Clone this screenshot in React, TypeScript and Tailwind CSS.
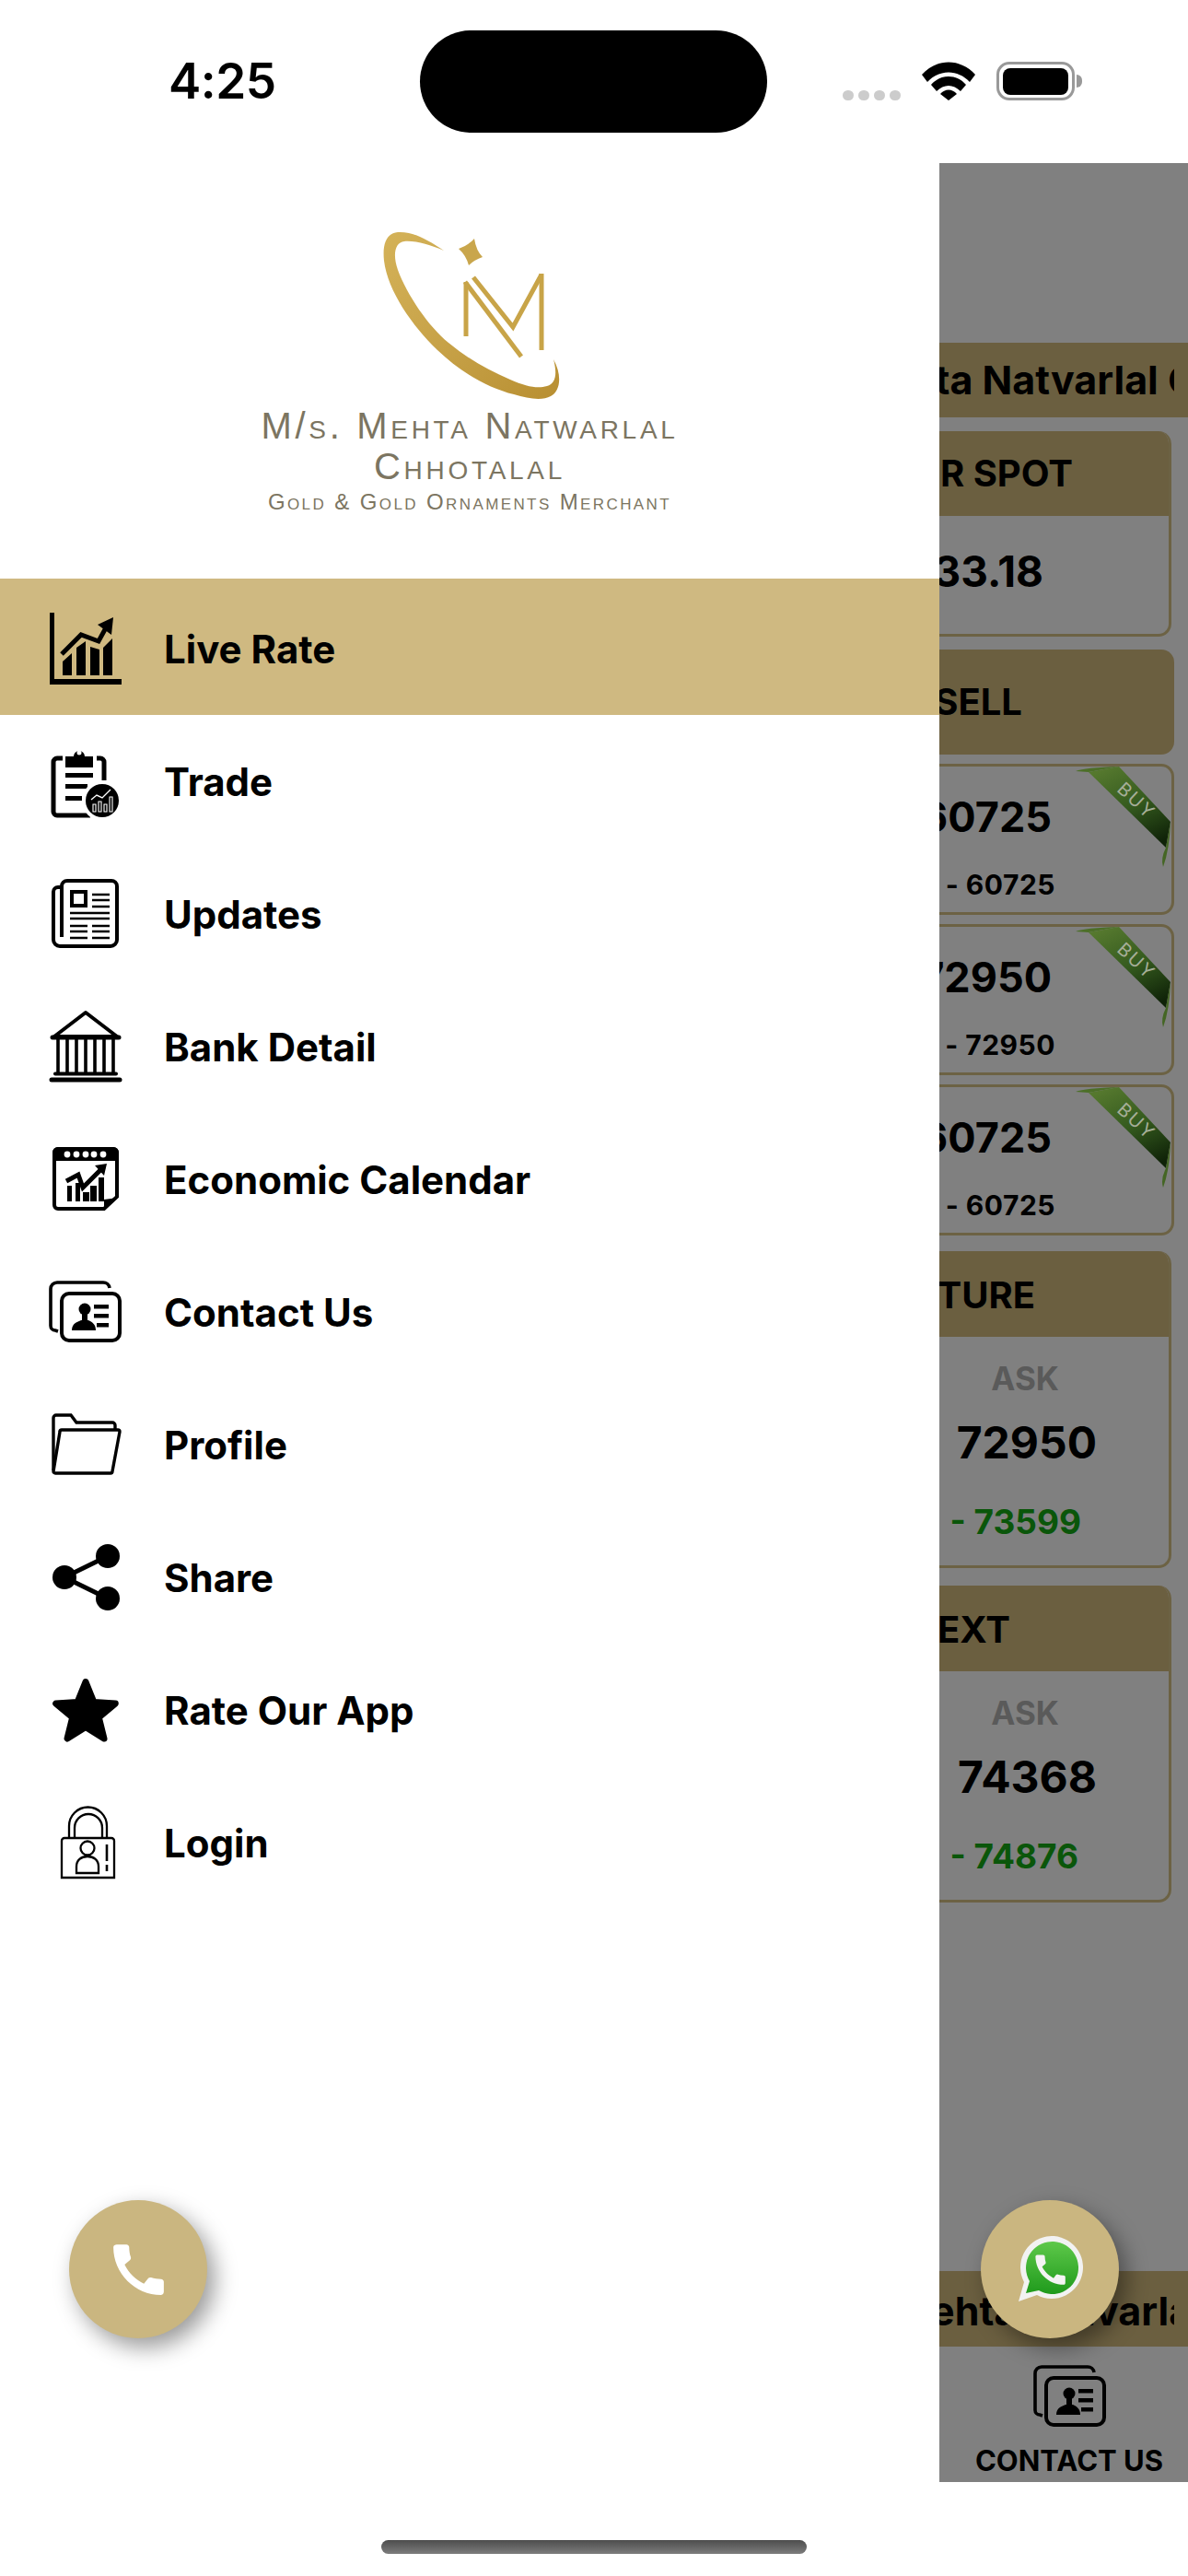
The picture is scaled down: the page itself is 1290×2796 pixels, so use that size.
import type { ReactNode } from "react";
import { MdCall } from "react-icons/md";

function Glyph({ children }: { children: ReactNode }) {
  return (
    <svg width="80" height="80" viewBox="0 0 80 80" className="shrink-0">
      {children}
    </svg>
  );
}

const LiveIcon = () => (
  <Glyph>
    <path d="M1 1h5v72h73v6H1z" />
    <path d="M15 69V54l10-9v24zM30 69V39l10-7 0 37zM45 69V38l10 3v28zM59 69V39l10-10v40z" />
    <path d="M14 46l21-21 19 7 11-20" fill="none" stroke="#000" strokeWidth="5" />
    <path d="M53 14l17-8-2 19z" />
  </Glyph>
);

const TradeIcon = () => (
  <Glyph>
    <path d="M15 15H9a4 4 0 0 0-4 4v54a4 4 0 0 0 4 4h36M52 15h4a4 4 0 0 1 4 4v20" fill="none" stroke="#000" strokeWidth="5" />
    <path d="M18 25V13h9a6 6 0 0 1 12 0h9v12z" />
    <circle cx="33" cy="9" r="2.5" fill="#fff" />
    <path d="M18 31h30v5H18zM18 43h24v5H18zM18 56h18v5H18z" />
    <circle cx="58" cy="61" r="22" fill="#fff" />
    <circle cx="58" cy="61" r="18" />
    <path d="M46 60l6-5 6 3 9-9" fill="none" stroke="#fff" strokeWidth="1.4" />
    <path d="M48 65h3v8h-3zM54 62h3v11h-3zM60 65h3v8h-3zM66 57h3v16h-3z" fill="none" stroke="#fff" strokeWidth="1.1" />
  </Glyph>
);

const UpdatesIcon = () => (
  <Glyph>
    <path d="M14 11H10a5 5 0 0 0-5 5v52a7 7 0 0 0 7 7h55a7 7 0 0 0 7-7V10a6 6 0 0 0-6-6H20a6 6 0 0 0-6 6v55" fill="none" stroke="#000" strokeWidth="4" />
    <rect x="25" y="16" width="15" height="15" fill="none" stroke="#000" strokeWidth="4" />
    <path d="M47 19h19M47 25h19M47 32h19M23 39h43M23 45h43M23 53h19M47 53h19M23 59h19M47 59h19M23 66h19M47 66h19" stroke="#000" strokeWidth="2.6" />
  </Glyph>
);

const BankIcon = () => (
  <Glyph>
    <path d="M6 29L40 3l34 26z" fill="none" stroke="#000" strokeWidth="4" strokeLinejoin="round" />
    <path d="M4 30h72" stroke="#000" strokeWidth="5" strokeLinecap="round" />
    <path d="M10 32v36M20 32v36M30 32v36M40 32v36M50 32v36M60 32v36M70 32v36" stroke="#000" strokeWidth="3.6" />
    <path d="M7 69.5h66" stroke="#000" strokeWidth="4" strokeLinecap="round" />
    <path d="M3 76h74" stroke="#000" strokeWidth="5" strokeLinecap="round" />
  </Glyph>
);

const CalendarIcon = () => (
  <Glyph>
    <path d="M10 7h60a4 4 0 0 1 4 4v48L60 72H10a4 4 0 0 1-4-4V11a4 4 0 0 1 4-4z" fill="#fff" stroke="#000" strokeWidth="4" />
    <path d="M10 5h60a6 6 0 0 1 6 6v9H4v-9a6 6 0 0 1 6-6z" />
    <g fill="#fff">
      <circle cx="20" cy="13" r="3.4" />
      <circle cx="30" cy="13" r="3.4" />
      <circle cx="40" cy="13" r="3.4" />
      <circle cx="49" cy="13" r="3.4" />
      <circle cx="59" cy="13" r="3.4" />
    </g>
    <path d="M20 64V47h5v17zM29 64V44h5v20zM37 64V54h7v10zM45 64V47h7v17zM54 64V38h6v26z" />
    <path d="M19 42l13-7 5 14 20-20" fill="none" stroke="#000" strokeWidth="5" />
    <path d="M50 25l13-2-3 13z" />
    <path d="M60 73V62l15-2z" />
  </Glyph>
);

const ContactIcon = () => (
  <Glyph>
    <path d="M10 61l-3-1a5 5 0 0 1-5-5V15a7 7 0 0 1 7-7h50a7 7 0 0 1 7 6" fill="none" stroke="#000" strokeWidth="3.6" />
    <rect x="14" y="20" width="63" height="51" rx="8" fill="#fff" fillOpacity="0" stroke="#000" strokeWidth="4" />
    <circle cx="39" cy="37" r="6.5" />
    <path d="M25 60c0-8 6-9 10-11h8c4 2 8 4 8 11z" />
    <path d="M36 40h6v9h-6zM49 32h16v4.5H49zM49 42h16v4.5H49zM52 52h13v4.5H52z" />
  </Glyph>
);

const FolderIcon = () => (
  <Glyph>
    <path d="M5 68V11a3 3 0 0 1 3-3h16l6 8h39a3 3 0 0 1 3 3v5" fill="none" stroke="#000" strokeWidth="3.4" />
    <path d="M14 24h61a2 2 0 0 1 2 2l-8 43a2 2 0 0 1-2 2H7a2 2 0 0 1-2-2l7-43a2 2 0 0 1 2-2z" fill="none" stroke="#000" strokeWidth="3.4" strokeLinejoin="round" />
  </Glyph>
);

const ShareIcon = () => (
  <Glyph>
    <path d="M64 17L17 40l47 23" fill="none" stroke="#000" strokeWidth="5" />
    <circle cx="64" cy="17" r="13" />
    <circle cx="17" cy="40" r="13" />
    <circle cx="64" cy="63" r="13" />
  </Glyph>
);

const StarIcon = () => (
  <Glyph>
    <polygon
      points="40,9.5 48.8,31.4 72.3,33 54.3,48.1 60,71 40,58.5 20,71 25.7,48.1 7.7,33 31.2,31.4"
      stroke="#000"
      strokeWidth="7"
      strokeLinejoin="round"
    />
  </Glyph>
);

const LockIcon = () => (
  <Glyph>
    <path d="M22 35V22a20 20 0 0 1 41 0v13M28 35V24a14.500 14.500 0 0 1 30 0v11" fill="none" stroke="#000" strokeWidth="2.3" />
    <path d="M14 78V38a3 3 0 0 1 3-3h51a3 3 0 0 1 3 3v40z" fill="none" stroke="#000" strokeWidth="2.3" />
    <circle cx="42" cy="46" r="7.500" fill="none" stroke="#000" strokeWidth="2.3" />
    <path d="M30 73v-7c0-7 5-11 12-11s12 4 12 11v7z" fill="none" stroke="#000" strokeWidth="2.3" />
    <path d="M63 42v18M63 64v7" stroke="#000" strokeWidth="2.6" />
  </Glyph>
);

const menu = [
  { label: "Trade", icon: <TradeIcon /> },
  { label: "Updates", icon: <UpdatesIcon /> },
  { label: "Bank Detail", icon: <BankIcon /> },
  { label: "Economic Calendar", icon: <CalendarIcon /> },
  { label: "Contact Us", icon: <ContactIcon /> },
  { label: "Profile", icon: <FolderIcon /> },
  { label: "Share", icon: <ShareIcon /> },
  { label: "Rate Our App", icon: <StarIcon /> },
  { label: "Login", icon: <LockIcon /> },
];

function Logo() {
  return (
    <svg width="220" height="200" viewBox="400 240 220 200" className="shrink-0">
      <defs>
        <linearGradient id="gold" x1="0" y1="0" x2="1" y2="1">
          <stop offset="0" stopColor="#d4b258" />
          <stop offset="0.5" stopColor="#c7a248" />
          <stop offset="1" stopColor="#b88f32" />
        </linearGradient>
      </defs>
      <path
        d="M480 272C462 260 446 251 430 252C418 253 413 264 415 283C419 316 446 354 473 380C498 404 528 421 556 428C572 433 587 435 596 430C606 425 609 408 599 390C603 405 602 416 592 419C582 422 570 420 552 412C528 402 507 390 485 372C463 354 440 320 430 293C424 276 427 263 437 262C450 261 465 266 480 272Z"
        fill="url(#gold)"
      />
      <path d="M513 259Q515 272 522 279Q513 282 507 288Q504 277 496 270Q507 266 513 259Z" fill="#c9a64c" />
      <g stroke="#c8a448" strokeWidth="5" fill="none">
        <path d="M504 306V365" />
        <path d="M503 306L564 387" />
        <path d="M512 301L555 355L586 298" />
        <path d="M586 297V380" />
      </g>
    </svg>
  );
}

function Ribbon() {
  return (
    <svg width="104" height="110" viewBox="0 0 104 110" className="absolute top-0 right-0">
      <defs>
        <linearGradient id="band" x1="0.25" y1="0" x2="0.75" y2="1">
          <stop offset="0" stopColor="#55782e" />
          <stop offset="0.5" stopColor="#345a1e" />
          <stop offset="1" stopColor="#0f2208" />
        </linearGradient>
      </defs>
      <path d="M0 5Q10 1 47 0L14 6Z" fill="#4c6f28" />
      <path d="M14 6L47 0L103 60L98 88Z" fill="url(#band)" />
      <path d="M103 60Q102 90 95 109Q92 100 98 88Z" fill="#446624" />
      <text
        transform="translate(66 37) rotate(43)"
        textAnchor="middle"
        dominantBaseline="central"
        fontSize="20"
        letterSpacing="2"
        fontFamily="Inter, sans-serif"
        fill="#a6ae98"
      >
        BUY
      </text>
    </svg>
  );
}

function SellRow({ price, range }: { price: string; range: string }) {
  return (
    <div className="relative -ml-[200px] mr-[15px] h-[164px] rounded-[14px] border-[3px] border-[#6c6244] flex flex-col items-end">
      <Ribbon />
      <span className="mt-[31px] pr-[130px] text-[45px] leading-[48px] font-bold text-black">{price}</span>
      <span className="mt-[32px] pr-[126px] text-[30px] leading-[34px] font-bold tracking-[0.5px] text-black">{range}</span>
    </div>
  );
}

function FutureCard({ title, titleClass, ask, low, lowClass }: { title: string; titleClass: string; ask: string; low: string; lowClass: string }) {
  return (
    <div className="-ml-[200px] mr-[18px] h-[344px] rounded-[14px] border-r-[3px] border-b-[3px] border-[#6c6244] flex flex-col overflow-hidden">
      <div className={`h-[93px] -mr-[3px] pt-[2px] bg-[#6b5f40] flex items-center justify-end text-[40px] font-bold text-black ${titleClass}`}>
        {title}
      </div>
      <div className="flex flex-col items-end">
        <span className="mt-[27px] pr-[119px] text-[35px] leading-[36px] font-bold text-[#5a5a5a]">ASK</span>
        <span className="mt-[26px] pr-[78px] text-[48px] leading-[52px] font-bold text-black">{ask}</span>
        <span className={`mt-[42px] text-[37px] leading-[36px] font-bold text-[#0a560a] ${lowClass}`}>{low}</span>
      </div>
    </div>
  );
}

export default function App() {
  return (
    <div className="relative w-[1290px] h-[2796px] bg-white font-[Inter,sans-serif] text-black overflow-hidden flex flex-col">
      {/* Status bar */}
      <div className="h-[177px] shrink-0 flex items-center pl-[183px] pb-[1px]">
        <span className="w-[273px] text-[53px] leading-none font-semibold tracking-[-0.5px]">4:25</span>
        <div className="w-[377px] h-[111px] rounded-full bg-black shrink-0" />
        <div className="ml-[82px] h-[42px] flex items-end">
          <div className="flex gap-[5px]">
            <span className="w-[12px] h-[11px] rounded-full bg-[#cccccc]" />
            <span className="w-[12px] h-[11px] rounded-full bg-[#cccccc]" />
            <span className="w-[12px] h-[11px] rounded-full bg-[#cccccc]" />
            <span className="w-[12px] h-[11px] rounded-full bg-[#cccccc]" />
          </div>
          <svg width="58" height="42" viewBox="0 0 58 42" className="ml-[23px]">
            <path d="M0 14C16-4 42-4 58 14L52 22C39 8 19 8 6 22Z" />
            <path d="M10 25C20 13 38 13 48 25L42 32C34 24 24 24 16 32Z" />
            <path d="M20 35C25 29 33 29 38 35L29 42Z" />
          </svg>
          <div className="ml-[23px] flex items-center">
            <div className="w-[85px] h-[42px] rounded-[14px] border-[3px] border-[#999999] flex items-center justify-center">
              <div className="w-[71px] h-[29px] rounded-[8px] bg-black" />
            </div>
            <div className="ml-[2px] w-[6px] h-[14px] rounded-r-full bg-[#999999]" />
          </div>
        </div>
      </div>

      <div className="flex h-[2517px] shrink-0">
        {/* Drawer */}
        <div className="w-[1020px] shrink-0 bg-white flex flex-col">
          <div className="h-[451px] flex flex-col items-center font-['Liberation_Sans',sans-serif] text-[#7c7561] [font-variant-caps:small-caps]">
            <div className="mt-[63px] pl-[3px]">
              <Logo />
            </div>
            <span className="text-[40px] leading-[44px] tracking-[3.7px] whitespace-nowrap">M/s. Mehta Natwarlal</span>
            <span className="text-[40px] leading-[44px] tracking-[3.7px]">Chhotalal</span>
            <span className="mt-[3px] text-[24px] leading-[28px] tracking-[2.4px] whitespace-nowrap">Gold &amp; Gold Ornaments Merchant</span>
          </div>

          <div className="h-[148px] bg-[#cfb981] flex items-center gap-[45px] pl-[53px] pt-[4px] text-[42px] font-bold">
            <LiveIcon />
            <span>Live Rate</span>
          </div>
          {menu.map((item) => (
            <div key={item.label} className="h-[144px] flex items-center gap-[45px] pl-[53px] text-[42px] font-bold">
              {item.icon}
              <span>{item.label}</span>
            </div>
          ))}
        </div>

        {/* Rate screen behind the drawer */}
        <div className="flex-1 bg-[#808080] overflow-hidden flex flex-col">
          <div className="mt-[195px] h-[81px] shrink-0 bg-[#6b5f40] pr-[15px] flex items-center">
            <div className="overflow-hidden flex-1">
              <div className="-ml-[97px] text-[43px] font-bold whitespace-nowrap">Mehta Natvarlal Chhotalal</div>
            </div>
          </div>

          <div className="mt-[15px] -ml-[200px] mr-[18px] h-[223px] shrink-0 rounded-[14px] border-r-[3px] border-b-[3px] border-[#6c6244] overflow-hidden flex flex-col items-end">
            <div className="w-[calc(100%+3px)] -mr-[3px] h-[92px] bg-[#6b5f40] flex items-center justify-end pr-[107px] text-[40px] font-bold">
              SILVER SPOT
            </div>
            <span className="mt-[35px] pr-[136px] text-[46px] leading-[50px] font-bold">33.18</span>
          </div>

          <div className="mt-[14px] -ml-[200px] mr-[15px] h-[114px] shrink-0 rounded-[14px] bg-[#6b5f40] flex items-center justify-end pr-[165px] text-[40px] font-bold">
            SELL
          </div>

          <div className="mt-[10px] flex flex-col gap-[10px] shrink-0">
            <SellRow price="60725" range="- 60725" />
            <SellRow price="72950" range="- 72950" />
            <SellRow price="60725" range="- 60725" />
          </div>

          <div className="mt-[17px] flex flex-col gap-[19px] shrink-0">
            <FutureCard title="GOLD FUTURE" titleClass="pr-[148px]" ask="72950" low="- 73599" lowClass="pr-[95px]" />
            <FutureCard title="GOLD NEXT" titleClass="pr-[175px]" ask="74368" low="- 74876" lowClass="pr-[98px]" />
          </div>

          <div className="mt-[400px] h-[82px] shrink-0 bg-[#6b5f40] pr-[15px] flex items-center">
            <div className="overflow-hidden flex-1">
              <div className="-ml-[49px] pt-[4px] text-[43px] font-bold whitespace-nowrap">Mehta Natvarlal Chhotalal</div>
            </div>
          </div>

          <div className="mt-[14px] ml-[14px] flex flex-col items-center shrink-0">
            <ContactIcon />
            <span className="mt-[10px] -ml-[2px] text-[31px] leading-[40px] font-bold whitespace-nowrap">CONTACT US</span>
          </div>
        </div>
      </div>

      {/* Home indicator */}
      <div className="flex-1 flex justify-center pt-[63px]">
        <div className="w-[462px] h-[15px] rounded-full bg-gradient-to-b from-[#4d4d4d] to-[#7d7d7d]" />
      </div>

      {/* Floating call buttons */}
      <div className="absolute left-[75px] top-[2388px] w-[150px] h-[150px] rounded-full bg-[#cab680] shadow-[8px_10px_24px_rgba(0,0,0,0.4)] flex items-center justify-center text-white">
        <MdCall size={73} />
      </div>
      <div className="absolute left-[1065px] top-[2388px] w-[150px] h-[150px] rounded-full bg-[#cab680] shadow-[8px_10px_24px_rgba(0,0,0,0.4)] flex items-center justify-center">
        <svg width="72" height="72" viewBox="0 0 72 72">
          <defs>
            <linearGradient id="wa" x1="0" y1="0" x2="0" y2="1">
              <stop offset="0" stopColor="#5ec84a" />
              <stop offset="1" stopColor="#1f9a1c" />
            </linearGradient>
          </defs>
          <path d="M2 71L8 50a34 34 0 1 1 14 14z" fill="#f2f2f2" />
          <path d="M10 62L14 49a28.500 28.500 0 1 1 10 10z" fill="url(#wa)" />
          <path
            transform="translate(15 15) scale(1.8)"
            d="M20.010 15.380c-1.230 0-2.420-.2-3.530-.56-.35-.12-.74-.03-1.010.24l-1.570 1.970c-2.830-1.350-5.480-3.900-6.890-6.830l1.950-1.660c.27-.28.35-.67.24-1.020-.37-1.110-.56-2.300-.56-3.530 0-.54-.45-.99-.99-.99H4.190C3.650 3 3 3.240 3 3.990 3 13.280 10.730 21 20.010 21c.71 0 .99-.63.99-1.180v-3.450c0-.54-.45-.99-.99-.99z"
            fill="#f4f4f4"
          />
        </svg>
      </div>
    </div>
  );
}
